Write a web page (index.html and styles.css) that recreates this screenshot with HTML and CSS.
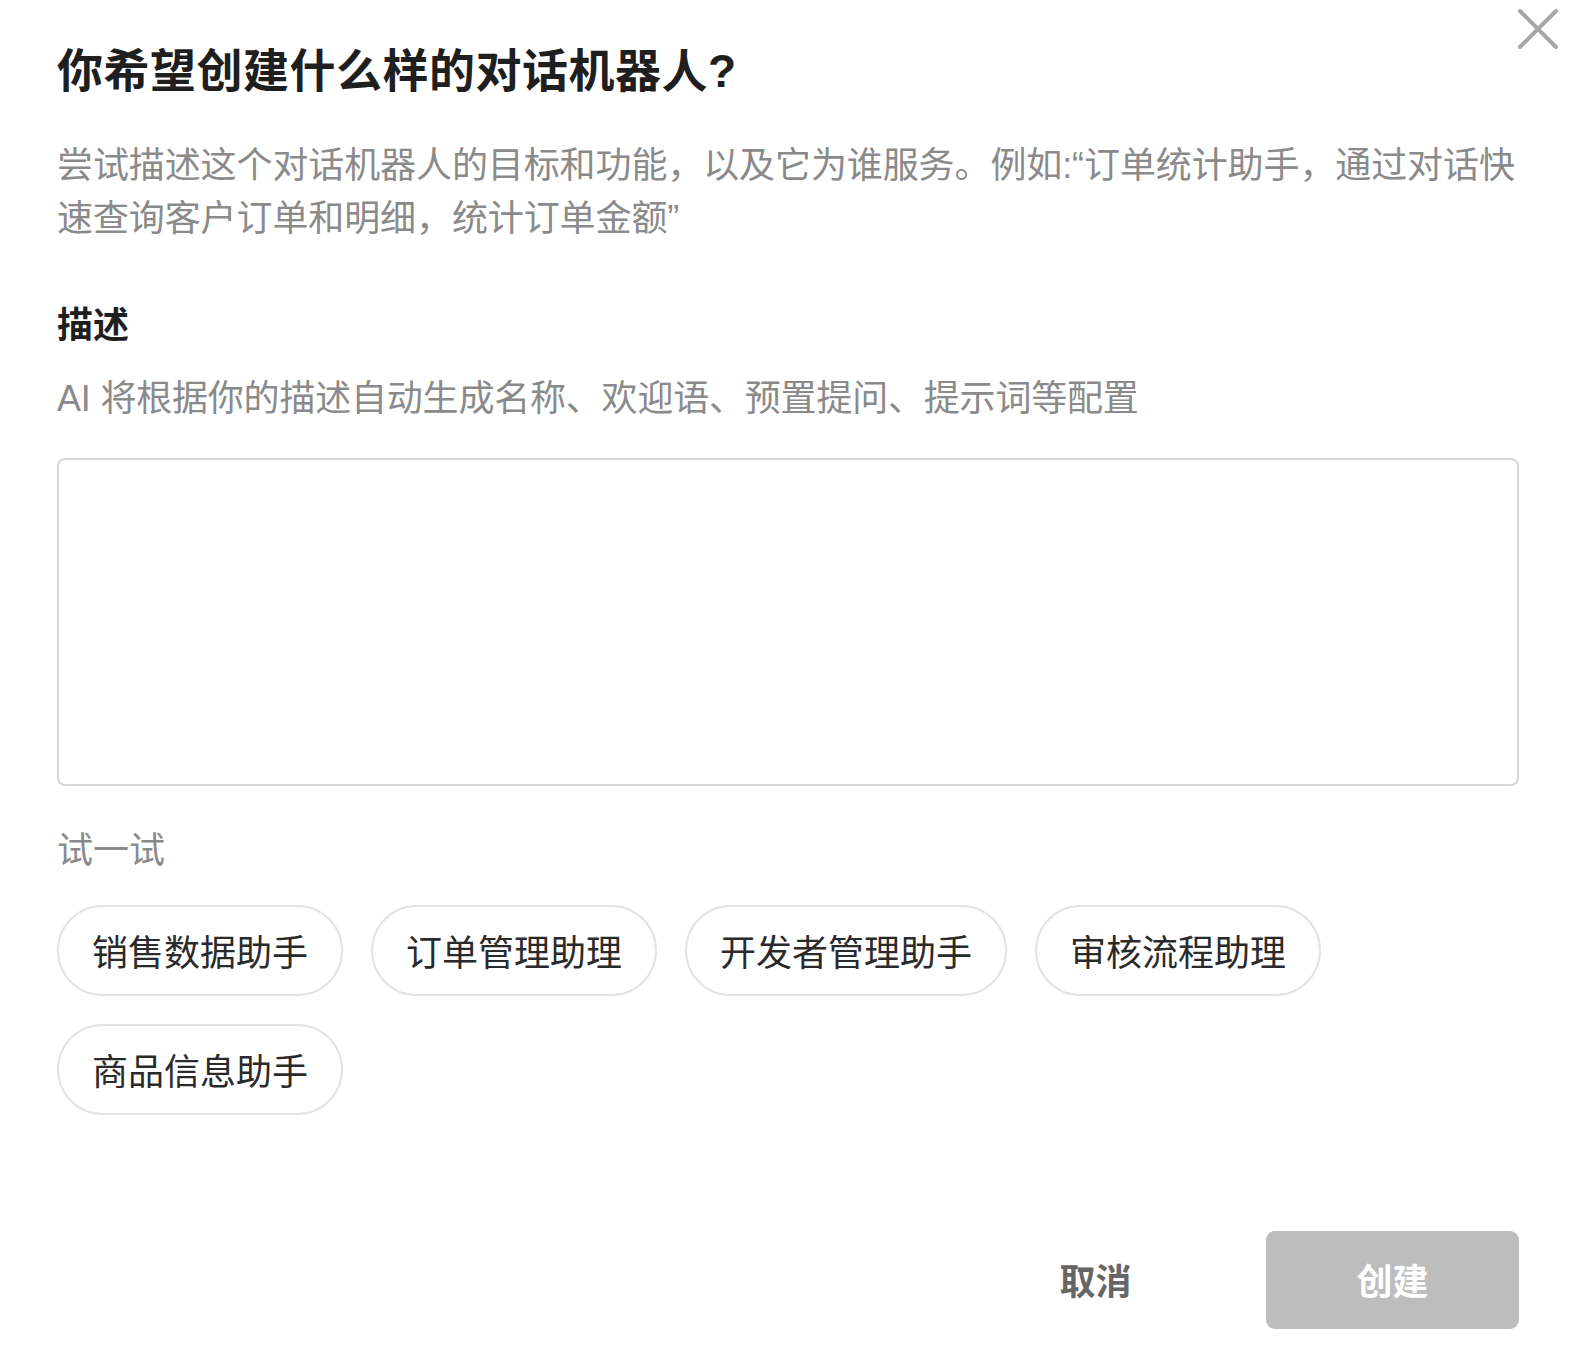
FILE: index.html
```html
<!DOCTYPE html>
<html lang="zh-CN">
<head>
<meta charset="utf-8">
<title>创建对话机器人</title>
<link rel="stylesheet" href="styles.css">
</head>
<body>
<div class="dialog">
  <button class="close" aria-label="关闭">
    <svg width="42" height="42" viewBox="0 0 42 42"><path d="M3 3 L39 39 M39 3 L3 39" stroke="#a6a6a6" stroke-width="4" stroke-linecap="round" fill="none"/></svg>
  </button>
  <h1 class="title">你希望创建什么样的对话机器人?</h1>
  <p class="intro">尝试描述这个对话机器人的目标和功能，以及它为谁服务。例如:“订单统计助手，通过对话快速查询客户订单和明细，统计订单金额”</p>
  <div class="label">描述</div>
  <div class="hint">AI 将根据你的描述自动生成名称、欢迎语、预置提问、提示词等配置</div>
  <textarea class="desc"></textarea>
  <div class="try">试一试</div>
  <div class="chips">
    <button class="chip">销售数据助手</button>
    <button class="chip">订单管理助理</button>
    <button class="chip">开发者管理助手</button>
    <button class="chip">审核流程助理</button>
    <button class="chip">商品信息助手</button>
  </div>
  <div class="footer">
    <button class="btn cancel">取消</button>
    <button class="btn create">创建</button>
  </div>
</div>
</body>
</html>
```

FILE: styles.css
```css
html, body {
  margin: 0;
  padding: 0;
  background: #ffffff;
}
body {
  font-family: "Liberation Sans", "Noto Sans CJK SC", sans-serif;
}
.dialog {
  position: relative;
  width: 1576px;
  height: 1352px;
  box-sizing: border-box;
  padding: 39px 57px 0 57px;
}
.close {
  position: absolute;
  top: 8px;
  right: 17px;
  padding: 0;
  border: 0;
  background: none;
  width: 42px;
  height: 42px;
}
.close svg { display: block; }
.title {
  margin: 0;
  font-size: 46px;
  line-height: 64px;
  font-weight: 700;
  letter-spacing: 0.5px;
  color: #1f1f1f;
}
.intro {
  margin: 36px 0 0 0;
  font-size: 36px;
  line-height: 53px;
  letter-spacing: -0.1px;
  color: #8a8a8a;
}
.label {
  margin-top: 56px;
  font-size: 36px;
  line-height: 50px;
  font-weight: 700;
  color: #1f1f1f;
}
.hint {
  margin-top: 23px;
  font-size: 36px;
  line-height: 50px;
  letter-spacing: -0.2px;
  color: #8a8a8a;
}
.desc {
  display: block;
  margin-top: 34px;
  width: 100%;
  height: 328px;
  box-sizing: border-box;
  border: 2px solid #d6d6d6;
  border-radius: 8px;
  resize: none;
  outline: none;
  font-family: inherit;
  font-size: 36px;
}
.try {
  margin-top: 40px;
  font-size: 36px;
  line-height: 50px;
  color: #8a8a8a;
}
.chips {
  margin-top: 29px;
  display: flex;
  flex-wrap: wrap;
  column-gap: 28px;
  row-gap: 28px;
  width: 1300px;
}
.chip {
  height: 91px;
  box-sizing: border-box;
  padding: 0 33px 2px;
  border: 2px solid #e3e3e3;
  border-radius: 46px;
  background: #fff;
  font-family: inherit;
  font-size: 36px;
  color: #2a2a2a;
}
.footer {
  margin-top: 116px;
  display: flex;
  justify-content: flex-end;
  gap: 44px;
}
.btn {
  width: 253px;
  height: 98px;
  padding: 0 0 3px;
  border: 0;
  border-radius: 9px;
  font-family: inherit;
  font-size: 36px;
  font-weight: 700;
}
.cancel {
  background: transparent;
  color: #666666;
}
.create {
  background: #bdbdbd;
  color: #ffffff;
}
```
